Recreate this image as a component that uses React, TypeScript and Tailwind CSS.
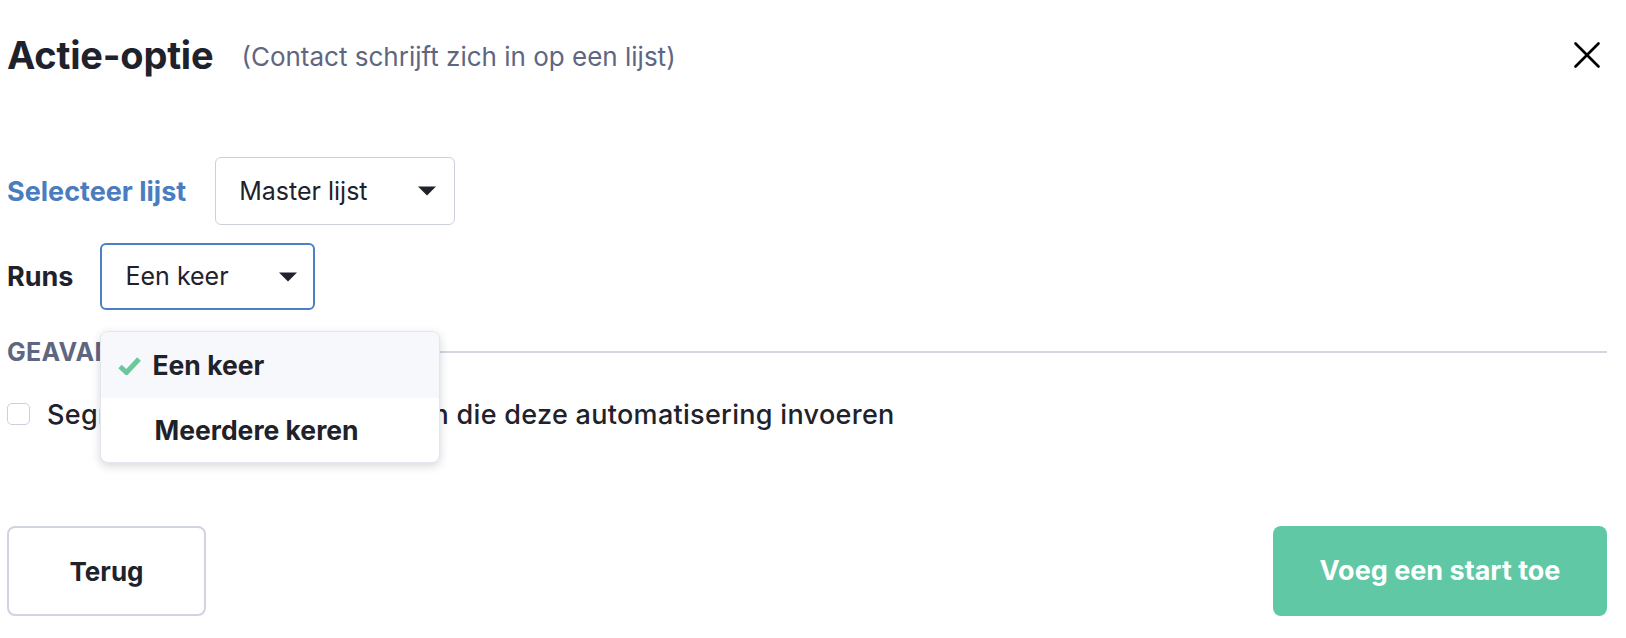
import { X } from "lucide-react";

// ── Caret ────────────────────────────────────────────────────────────────────
function Caret() {
  return (
    <svg width="18" height="10" viewBox="0 0 18 10" className="shrink-0">
      <path d="M0 0.5H18L9 9.5Z" fill="#1f222b" />
    </svg>
  );
}

// ── Check ────────────────────────────────────────────────────────────────────
function Check() {
  return (
    <svg width="23" height="19" viewBox="0 0 23 19" className="shrink-0">
      <path d="M2 10.5L8.5 16.5L21 3" fill="none" stroke="#6cc89b" strokeWidth="5" strokeLinejoin="miter" />
    </svg>
  );
}

export default function App() {
  return (
    <div
      className="w-[1626px] h-[638px] bg-white flex flex-col pl-[7px] pr-[19px] text-[#1f222b] overflow-hidden"
      style={{ fontFamily: "Inter, 'Noto Sans', sans-serif" }}
    >
      {/* Header */}
      <div className="flex items-center h-[48px] mt-[31px]">
        <h1 className="text-[38px] font-bold leading-none tracking-[-0.2px]">Actie-optie</h1>
        <span className="ml-[28px] text-[26px] text-[#5e6682] leading-none mt-[3px]">
          (Contact schrijft zich in op een lijst)
        </span>
        <button className="ml-auto mr-[-3px] w-[46px] h-[46px] flex items-center justify-center text-black">
          <X size={46} strokeWidth={1.4} />
        </button>
      </div>

      {/* Selecteer lijst */}
      <div className="flex items-center mt-[78px] h-[68px]">
        <span className="text-[27px] font-bold text-[#4a7dbf] leading-none">Selecteer lijst</span>
        <button className="ml-[29px] w-[240px] h-[68px] rounded-[6px] border-[1.5px] border-[#ccd0de] flex items-center justify-between pl-[23px] pr-[18px]">
          <span className="text-[25px] leading-none">Master lijst</span>
          <Caret />
        </button>
      </div>

      {/* Runs */}
      <div className="flex items-center mt-[18px] h-[67px]">
        <span className="text-[27px] font-bold leading-none">Runs</span>
        <div className="relative ml-[27px]">
          <button className="w-[215px] h-[67px] rounded-[6px] border-2 border-[#4a80c4] flex items-center justify-between pl-[23px] pr-[16px]">
            <span className="text-[25px] leading-none">Een keer</span>
            <Caret />
          </button>

          {/* Dropdown */}
          <div className="absolute left-0 top-full mt-[21px] w-[340px] z-10 bg-white rounded-[8px] border border-[#e3e6ee] shadow-[0_3px_10px_rgba(30,35,60,0.18)] overflow-hidden">
            <div className="h-[66px] bg-[#f7f8fc] flex items-center pl-[17px] gap-[11px]">
              <Check />
              <span className="text-[26.5px] font-bold leading-none">Een keer</span>
            </div>
            <div className="h-[64px] flex items-center pl-[53px]">
              <span className="text-[26.5px] font-bold leading-none">Meerdere keren</span>
            </div>
          </div>
        </div>
      </div>

      {/* Section heading */}
      <div className="flex items-center mt-[22px] h-[40px]">
        <span className="text-[25px] font-bold text-[#5e6682] leading-none tracking-[0.3px]">GEAVANCEERD</span>
        <div className="flex-1 h-[2px] bg-[#d3d6e2] ml-[14px]" />
      </div>

      {/* Checkbox */}
      <label className="flex items-center mt-[20px] h-[44px]">
        <span className="w-[23px] h-[22px] rounded-[5px] border-[1.5px] border-[#ccd0de] bg-white" />
        <span className="ml-[17px] text-[27px] font-medium leading-none tracking-[0.3px]">
          Segmenteer nieuwe contacten die deze automatisering invoeren
        </span>
      </label>

      {/* Footer */}
      <div className="flex items-center justify-between mt-[90px]">
        <button className="w-[199px] h-[90px] rounded-[8px] border-2 border-[#d0d4e2] text-[26px] font-bold">
          Terug
        </button>
        <button className="w-[334px] h-[90px] rounded-[8px] bg-[#61c8a5] text-white text-[27px] font-bold">
          Voeg een start toe
        </button>
      </div>
    </div>
  );
}
